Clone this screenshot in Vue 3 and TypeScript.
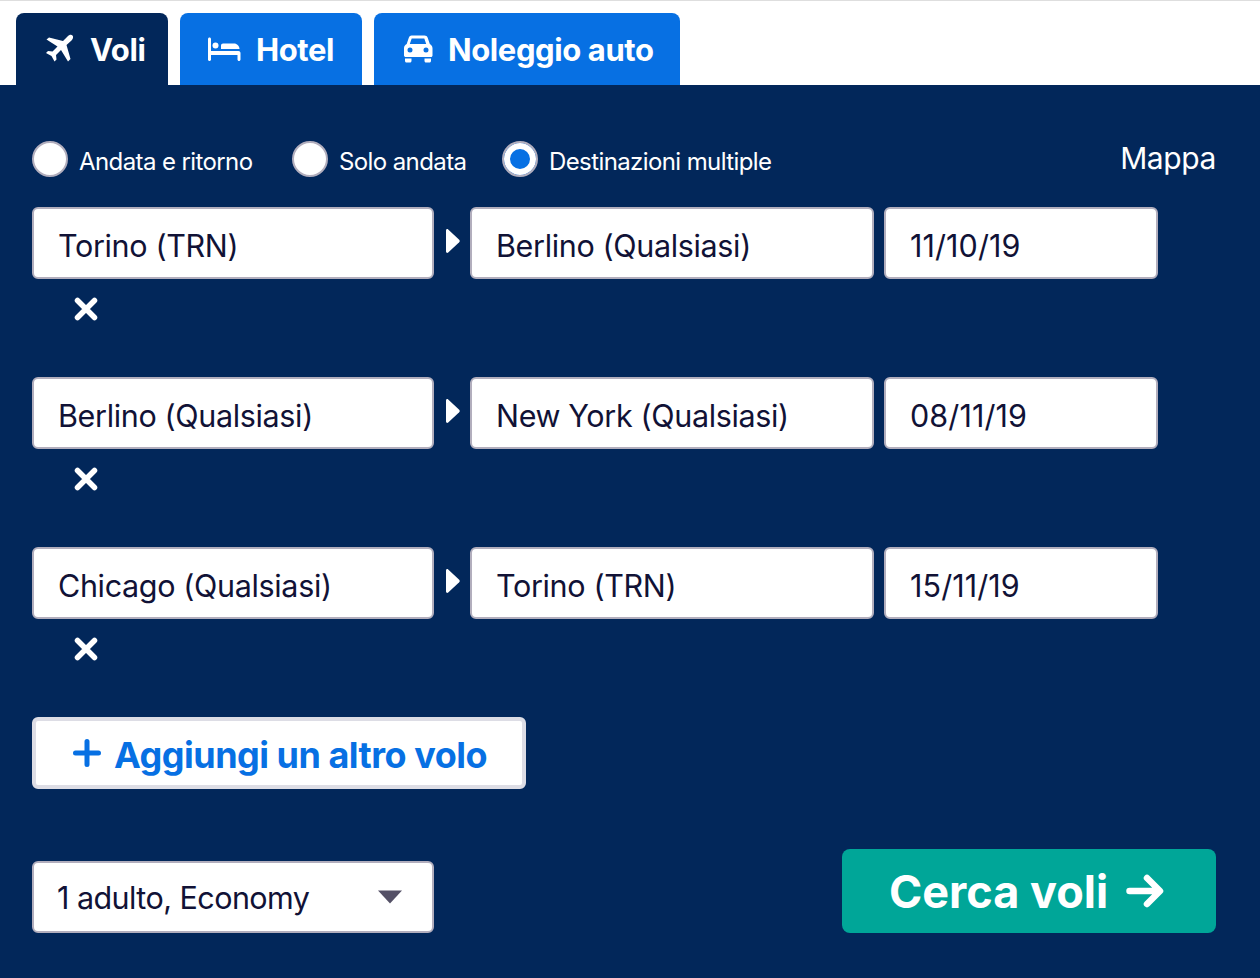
<template>
  <div class="page">
    <nav class="tabs">
      <div v-for="tab in tabs" :key="tab.label" class="tab" :class="{ 'tab--active': tab.active }">
        <svg v-if="tab.icon === 'plane'" class="tab__icon" viewBox="0 0 30 30" width="30" height="30">
          <path fill="#fff" d="M27.5 1.500c-1.200-1.200-3.500-.6-5 .9L18 7 4 3.500 1.500 5.500l11 7-5 5-4.500-.5-2 2 5.500 3 3 5.500 2-2-.5-4.500 5-5 7 11.500 2.500-2.500-4-14 5-4.500c1.500-1.500 2.200-3.800 1-5z" />
        </svg>
        <svg v-else-if="tab.icon === 'bed'" class="tab__icon" viewBox="0 0 33 26" width="33" height="26">
          <path fill="#fff" d="M1.500 1.500C2.300 1.500 3 2.200 3 3v12h27.500c1.100 0 2 .9 2 2v6.500c0 .8-.7 1.500-1.500 1.500s-1.500-.7-1.500-1.500V19H3v4.500C3 24.300 2.300 25 1.500 25S0 24.300 0 23.500V3c0-.8.7-1.500 1.500-1.500z" />
          <circle cx="7.500" cy="9.500" r="3" fill="#fff" />
          <path fill="#fff" d="M13 9.500c0-1.100.9-2 2-2h11c3 0 5.500 2.500 5.500 5.500H13z" />
        </svg>
        <svg v-else class="tab__icon" viewBox="0 0 30 30" width="30" height="30">
          <path fill="#fff" fill-rule="evenodd" d="M8.500 1.500h13c1.500 0 2.700.9 3.200 2.300l2.100 6.200c1.500.8 2.700 2.300 2.700 4.200v7.300c0 .8-.7 1.500-1.500 1.500h-25C1.700 23 1 22.300 1 21.500v-7.300c0-1.900 1.100-3.400 2.700-4.200l2.100-6.200c.5-1.400 1.700-2.300 2.700-2.300zM8.700 4.500l-1.900 5.500h16.400l-1.900-5.500zM7 13.500a2.500 2.500 0 1 0 0 5 2.500 2.500 0 0 0 0-5zm16 0a2.500 2.500 0 1 0 0 5 2.500 2.500 0 0 0 0-5z" />
          <path fill="#fff" d="M2 24.500h6.500V27c0 .8-.7 1.500-1.500 1.500H3.500C2.700 28.500 2 27.800 2 27zM21.500 24.500H28V27c0 .8-.7 1.500-1.500 1.500H23c-.8 0-1.500-.7-1.500-1.500z" />
        </svg>
        <span>{{ tab.label }}</span>
      </div>
    </nav>

    <section class="panel">
      <div class="trip-types">
        <label v-for="t in tripTypes" :key="t.label" class="radio" :style="{ width: t.width + 'px' }">
          <span class="radio__dot" :class="{ 'radio__dot--on': t.checked }"></span>
          <span class="radio__label">{{ t.label }}</span>
        </label>
        <span class="map-link">Mappa</span>
      </div>

      <div v-for="leg in legs" :key="leg.date" class="leg">
        <div class="leg__fields">
          <div class="field field--from">{{ leg.from }}</div>
          <svg class="leg__arrow" viewBox="0 0 14 26" width="14" height="26">
            <path fill="#fff" d="M0 2.500C0 1.200 1.300.6 2.200 1.400l11 10.300c.7.700.7 1.900 0 2.600l-11 10.300C1.300 25.400 0 24.800 0 23.500z" />
          </svg>
          <div class="field field--to">{{ leg.to }}</div>
          <div class="field field--date">{{ leg.date }}</div>
        </div>
        <button class="leg__remove" type="button" aria-label="Rimuovi">
          <svg viewBox="0 0 24 24" width="24" height="24">
            <path stroke="#fff" stroke-width="5.500" stroke-linecap="round" fill="none" d="M3.500 3.500l17 17M20.500 3.500l-17 17" />
          </svg>
        </button>
      </div>

      <button class="add-leg" type="button">
        <svg viewBox="0 0 28 28" width="28" height="28">
          <path stroke="#0770e3" stroke-width="5" stroke-linecap="round" fill="none" d="M14 2.500v23M2.500 14h23" />
        </svg>
        <span>Aggiungi un altro volo</span>
      </button>

      <div class="footer">
        <div class="field field--select">
          <span>1 adulto, Economy</span>
          <svg viewBox="0 0 24 14" width="24" height="14">
            <path fill="#545066" d="M0 .5h24L12 13.500z" />
          </svg>
        </div>
        <button class="search" type="button">
          <span>Cerca voli</span>
          <svg viewBox="0 0 38 34" width="38" height="34">
            <path stroke="#fff" stroke-width="6.500" stroke-linecap="round" stroke-linejoin="round" fill="none" d="M3.500 17h30M21 4l13 13-13 13" />
          </svg>
        </button>
      </div>
    </section>
  </div>
</template>

<script setup lang="ts">
const tabs = [
  { label: 'Voli', icon: 'plane', active: true },
  { label: 'Hotel', icon: 'bed', active: false },
  { label: 'Noleggio auto', icon: 'car', active: false },
]

const tripTypes = [
  { label: 'Andata e ritorno', width: 260, checked: false },
  { label: 'Solo andata', width: 210, checked: false },
  { label: 'Destinazioni multiple', width: 300, checked: true },
]

const legs = [
  { from: 'Torino (TRN)', to: 'Berlino (Qualsiasi)', date: '11/10/19' },
  { from: 'Berlino (Qualsiasi)', to: 'New York (Qualsiasi)', date: '08/11/19' },
  { from: 'Chicago (Qualsiasi)', to: 'Torino (TRN)', date: '15/11/19' },
]
</script>

<style>
html,
body {
  margin: 0;
  background: #fff;
}
</style>

<style scoped>
.page {
  width: 1260px;
  height: 978px;
  overflow: hidden;
  box-sizing: border-box;
  border-top: 1px solid #dedede;
  font-family: Inter, "Liberation Sans", sans-serif;
  background: #fff;
}

.tabs {
  display: flex;
  gap: 12px;
  height: 72px;
  margin-top: 12px;
  padding-left: 16px;
}

.tab {
  display: flex;
  align-items: center;
  gap: 15px;
  box-sizing: border-box;
  padding-left: 29px;
  border-radius: 8px 8px 0 0;
  background: #0770e3;
  color: #fff;
  font-size: 31px;
  font-weight: 700;
  letter-spacing: -0.4px;
}

.tab:nth-child(1) {
  width: 152px;
}

.tab:nth-child(2) {
  width: 182px;
  padding-left: 28px;
}

.tab:nth-child(3) {
  width: 306px;
}

.tab--active {
  background: #02275a;
}

.tab__icon {
  flex: none;
}

.panel {
  height: 893px;
  box-sizing: border-box;
  padding: 56px 44px 0 32px;
  background: #02275a;
}

.trip-types {
  display: flex;
  align-items: center;
  height: 36px;
  margin-bottom: 30px;
}

.radio {
  display: flex;
  align-items: center;
  gap: 11px;
  color: #fff;
  font-size: 24px;
  letter-spacing: -0.6px;
  white-space: nowrap;
}

.radio__label {
  padding-top: 4px;
}

.radio__dot {
  flex: none;
  box-sizing: border-box;
  width: 36px;
  height: 36px;
  border: 2px solid #b2aebd;
  border-radius: 50%;
  background: #fff;
}

.radio__dot--on {
  background: #0770e3;
  box-shadow: inset 0 0 0 6px #fff;
}

.map-link {
  margin-left: auto;
  margin-top: -2px;
  color: #fff;
  font-size: 30px;
  letter-spacing: -0.4px;
}

.leg {
  height: 170px;
}

.leg__fields {
  display: flex;
  align-items: center;
  gap: 10px;
}

.leg__arrow {
  flex: none;
  margin: -4px 0 0 2px;
}

.field {
  box-sizing: border-box;
  height: 72px;
  display: flex;
  align-items: center;
  padding: 0 24px;
  border: 2px solid #b2aebd;
  border-radius: 6px;
  background: #fff;
  color: #111236;
  font-size: 30.5px;
  letter-spacing: -0.35px;
  white-space: nowrap;
}

.field--from,
.field--to,
.field--date {
  padding-top: 4px;
}

.field--from {
  width: 402px;
}

.field--to {
  width: 404px;
}

.field--date {
  width: 274px;
  letter-spacing: 0.1px;
}

.leg__remove {
  display: block;
  margin: 18px 0 0 42px;
  padding: 0;
  border: 0;
  background: none;
  line-height: 0;
}

.add-leg {
  display: flex;
  align-items: center;
  justify-content: center;
  gap: 13px;
  box-sizing: border-box;
  width: 494px;
  height: 72px;
  padding: 3px 0 0 2px;
  border: 4px solid #dddde5;
  border-radius: 6px;
  background: #fff;
  color: #0770e3;
  font-family: inherit;
  font-size: 36px;
  font-weight: 700;
  letter-spacing: -0.5px;
}

.add-leg svg {
  margin-top: -3px;
}

.footer {
  display: flex;
  align-items: flex-end;
  justify-content: space-between;
  margin-top: 60px;
}

.field--select {
  justify-content: space-between;
  width: 402px;
  padding: 0 30px 0 23px;
  letter-spacing: -0.55px;
}

.search {
  display: flex;
  align-items: center;
  gap: 18px;
  width: 374px;
  height: 84px;
  box-sizing: border-box;
  padding: 0 0 0 47px;
  border: 0;
  border-radius: 8px;
  background: #00a698;
  color: #fff;
  font-family: inherit;
  font-size: 45px;
  font-weight: 700;
  white-space: nowrap;
}
</style>
